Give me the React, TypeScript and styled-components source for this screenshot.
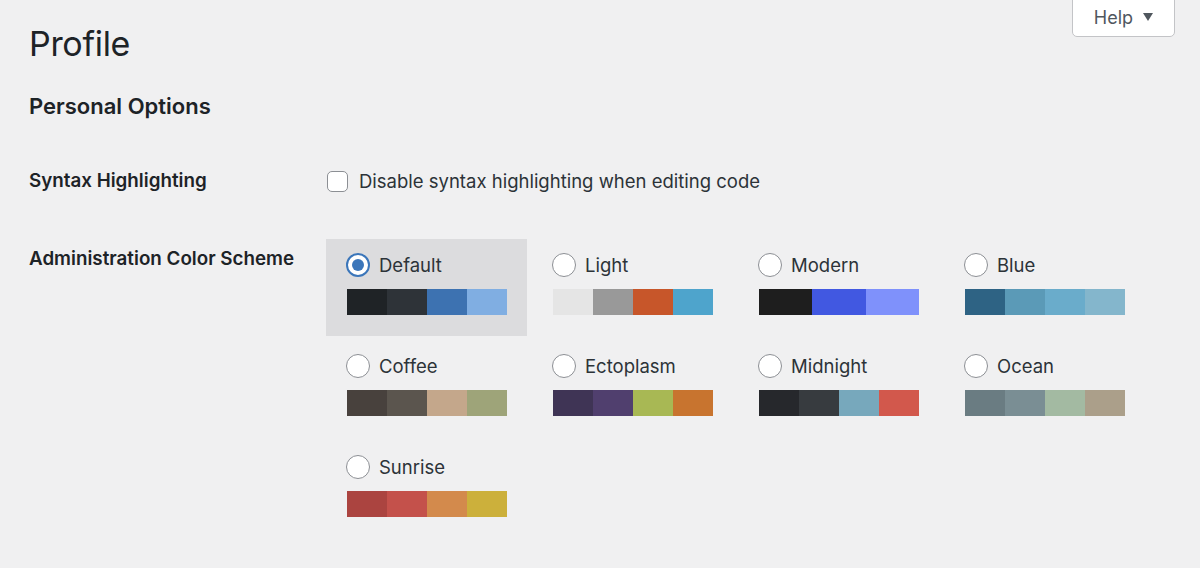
import React from 'react';
import styled, { createGlobalStyle } from 'styled-components';

const Global = createGlobalStyle`
  html, body { margin: 0; padding: 0; background: #f0f0f1; }
  body {
    font-family: Inter, "Noto Sans", "Liberation Sans", sans-serif;
    color: #1d2327;
    -webkit-font-smoothing: antialiased;
  }
`;

const Page = styled.div`
  width: 1200px;
  height: 568px;
  overflow: hidden;
  box-sizing: border-box;
  padding: 0 25px 0 29px;
`;

const Header = styled.header`
  display: flex;
  justify-content: space-between;
  align-items: flex-start;
`;

const Title = styled.h1`
  margin: 24px 0 0;
  font-size: 34px;
  font-weight: 400;
  line-height: 40px;
  letter-spacing: -0.3px;
`;

const HelpTab = styled.button`
  margin-top: -1px;
  width: 103px;
  height: 38px;
  box-sizing: border-box;
  border: 1px solid #c3c4c7;
  border-radius: 0 0 5px 5px;
  background: #fff;
  color: #50575e;
  font-family: inherit;
  font-size: 18px;
  display: flex;
  align-items: center;
  justify-content: center;
  gap: 10px;
  padding: 0 0 1px;
`;

const Caret = styled.span`
  width: 0;
  height: 0;
  border-left: 5px solid transparent;
  border-right: 5px solid transparent;
  border-top: 8px solid #50575e;
  margin-top: -2px;
`;

const SectionTitle = styled.h2`
  margin: 27px 0 0;
  font-size: 22px;
  font-weight: 600;
  line-height: 30px;
`;

const FormTable = styled.div`
  display: grid;
  grid-template-columns: 297px 1fr;
  row-gap: 43px;
  margin-top: 45px;
`;

const RowLabel = styled.div<{ $top?: number }>`
  font-size: 18.8px;
  font-weight: 600;
  line-height: 30px;
  padding-top: ${(p) => p.$top ?? 0}px;
`;

const CheckField = styled.label`
  display: flex;
  align-items: center;
  gap: 11px;
  font-size: 18.5px;
  line-height: 30px;
  color: #2c3338;
`;

const Checkbox = styled.span`
  width: 21px;
  height: 21px;
  box-sizing: border-box;
  border: 1.5px solid #8c8f94;
  border-radius: 5px;
  background: #fff;
  margin-left: 1px;
`;

const Picker = styled.div`
  display: grid;
  grid-template-columns: repeat(4, 201px);
  column-gap: 5px;
  row-gap: 4px;
`;

const Option = styled.div<{ $selected?: boolean }>`
  box-sizing: border-box;
  height: 97px;
  padding: 14px 20px 21px 21px;
  background: ${(p) => (p.$selected ? '#dcdcde' : 'transparent')};
  display: flex;
  flex-direction: column;
  gap: 12px;
`;

const OptionHead = styled.div`
  display: flex;
  align-items: center;
  gap: 9px;
  height: 24px;
  margin-left: -1px;
  font-size: 18.5px;
  color: #2c3338;
`;

const Radio = styled.span<{ $checked?: boolean }>`
  width: 24px;
  height: 24px;
  box-sizing: border-box;
  border-radius: 50%;
  border: ${(p) => (p.$checked ? '2px solid #3b76ba' : '1.5px solid #8c8f94')};
  background: #fff;
  display: flex;
  align-items: center;
  justify-content: center;
  flex-shrink: 0;
  &::after {
    content: '';
    display: ${(p) => (p.$checked ? 'block' : 'none')};
    width: 12px;
    height: 12px;
    border-radius: 50%;
    background: #3b76ba;
  }
`;

const Swatches = styled.div`
  display: flex;
  width: 160px;
  height: 26px;
`;

const Swatch = styled.span<{ $c: string }>`
  flex: 1;
  background: ${(p) => p.$c};
`;

const schemes: { name: string; colors: string[]; selected?: boolean }[] = [
  { name: 'Default', colors: ['#1f2326', '#2e3338', '#3d72b1', '#80aee2'], selected: true },
  { name: 'Light', colors: ['#e5e5e5', '#999999', '#c7562a', '#4ea4cc'] },
  { name: 'Modern', colors: ['#1e1e1e', '#4158e1', '#7f91fb'] },
  { name: 'Blue', colors: ['#2e6384', '#5b9ab7', '#6aaccb', '#84b6cc'] },
  { name: 'Coffee', colors: ['#48413d', '#5b554e', '#c4a78b', '#9ea479'] },
  { name: 'Ectoplasm', colors: ['#3f3455', '#503f6e', '#a8b854', '#c8742f'] },
  { name: 'Midnight', colors: ['#26282c', '#373b3f', '#77a8bc', '#d2584c'] },
  { name: 'Ocean', colors: ['#6a7c82', '#7a8e94', '#a3baa2', '#ab9f8a'] },
  { name: 'Sunrise', colors: ['#ab4440', '#c4514b', '#d38a4c', '#ccb03b'] },
];

export default function App() {
  return (
    <Page>
      <Global />
      <Header>
        <Title>Profile</Title>
        <HelpTab>
          Help <Caret />
        </HelpTab>
      </Header>
      <SectionTitle>Personal Options</SectionTitle>
      <FormTable>
        <RowLabel>Syntax Highlighting</RowLabel>
        <CheckField>
          <Checkbox />
          Disable syntax highlighting when editing code
        </CheckField>
        <RowLabel $top={5}>Administration Color Scheme</RowLabel>
        <Picker>
          {schemes.map((s) => (
            <Option key={s.name} $selected={s.selected}>
              <OptionHead>
                <Radio $checked={s.selected} />
                {s.name}
              </OptionHead>
              <Swatches>
                {s.colors.map((c) => (
                  <Swatch key={c} $c={c} />
                ))}
              </Swatches>
            </Option>
          ))}
        </Picker>
      </FormTable>
    </Page>
  );
}
